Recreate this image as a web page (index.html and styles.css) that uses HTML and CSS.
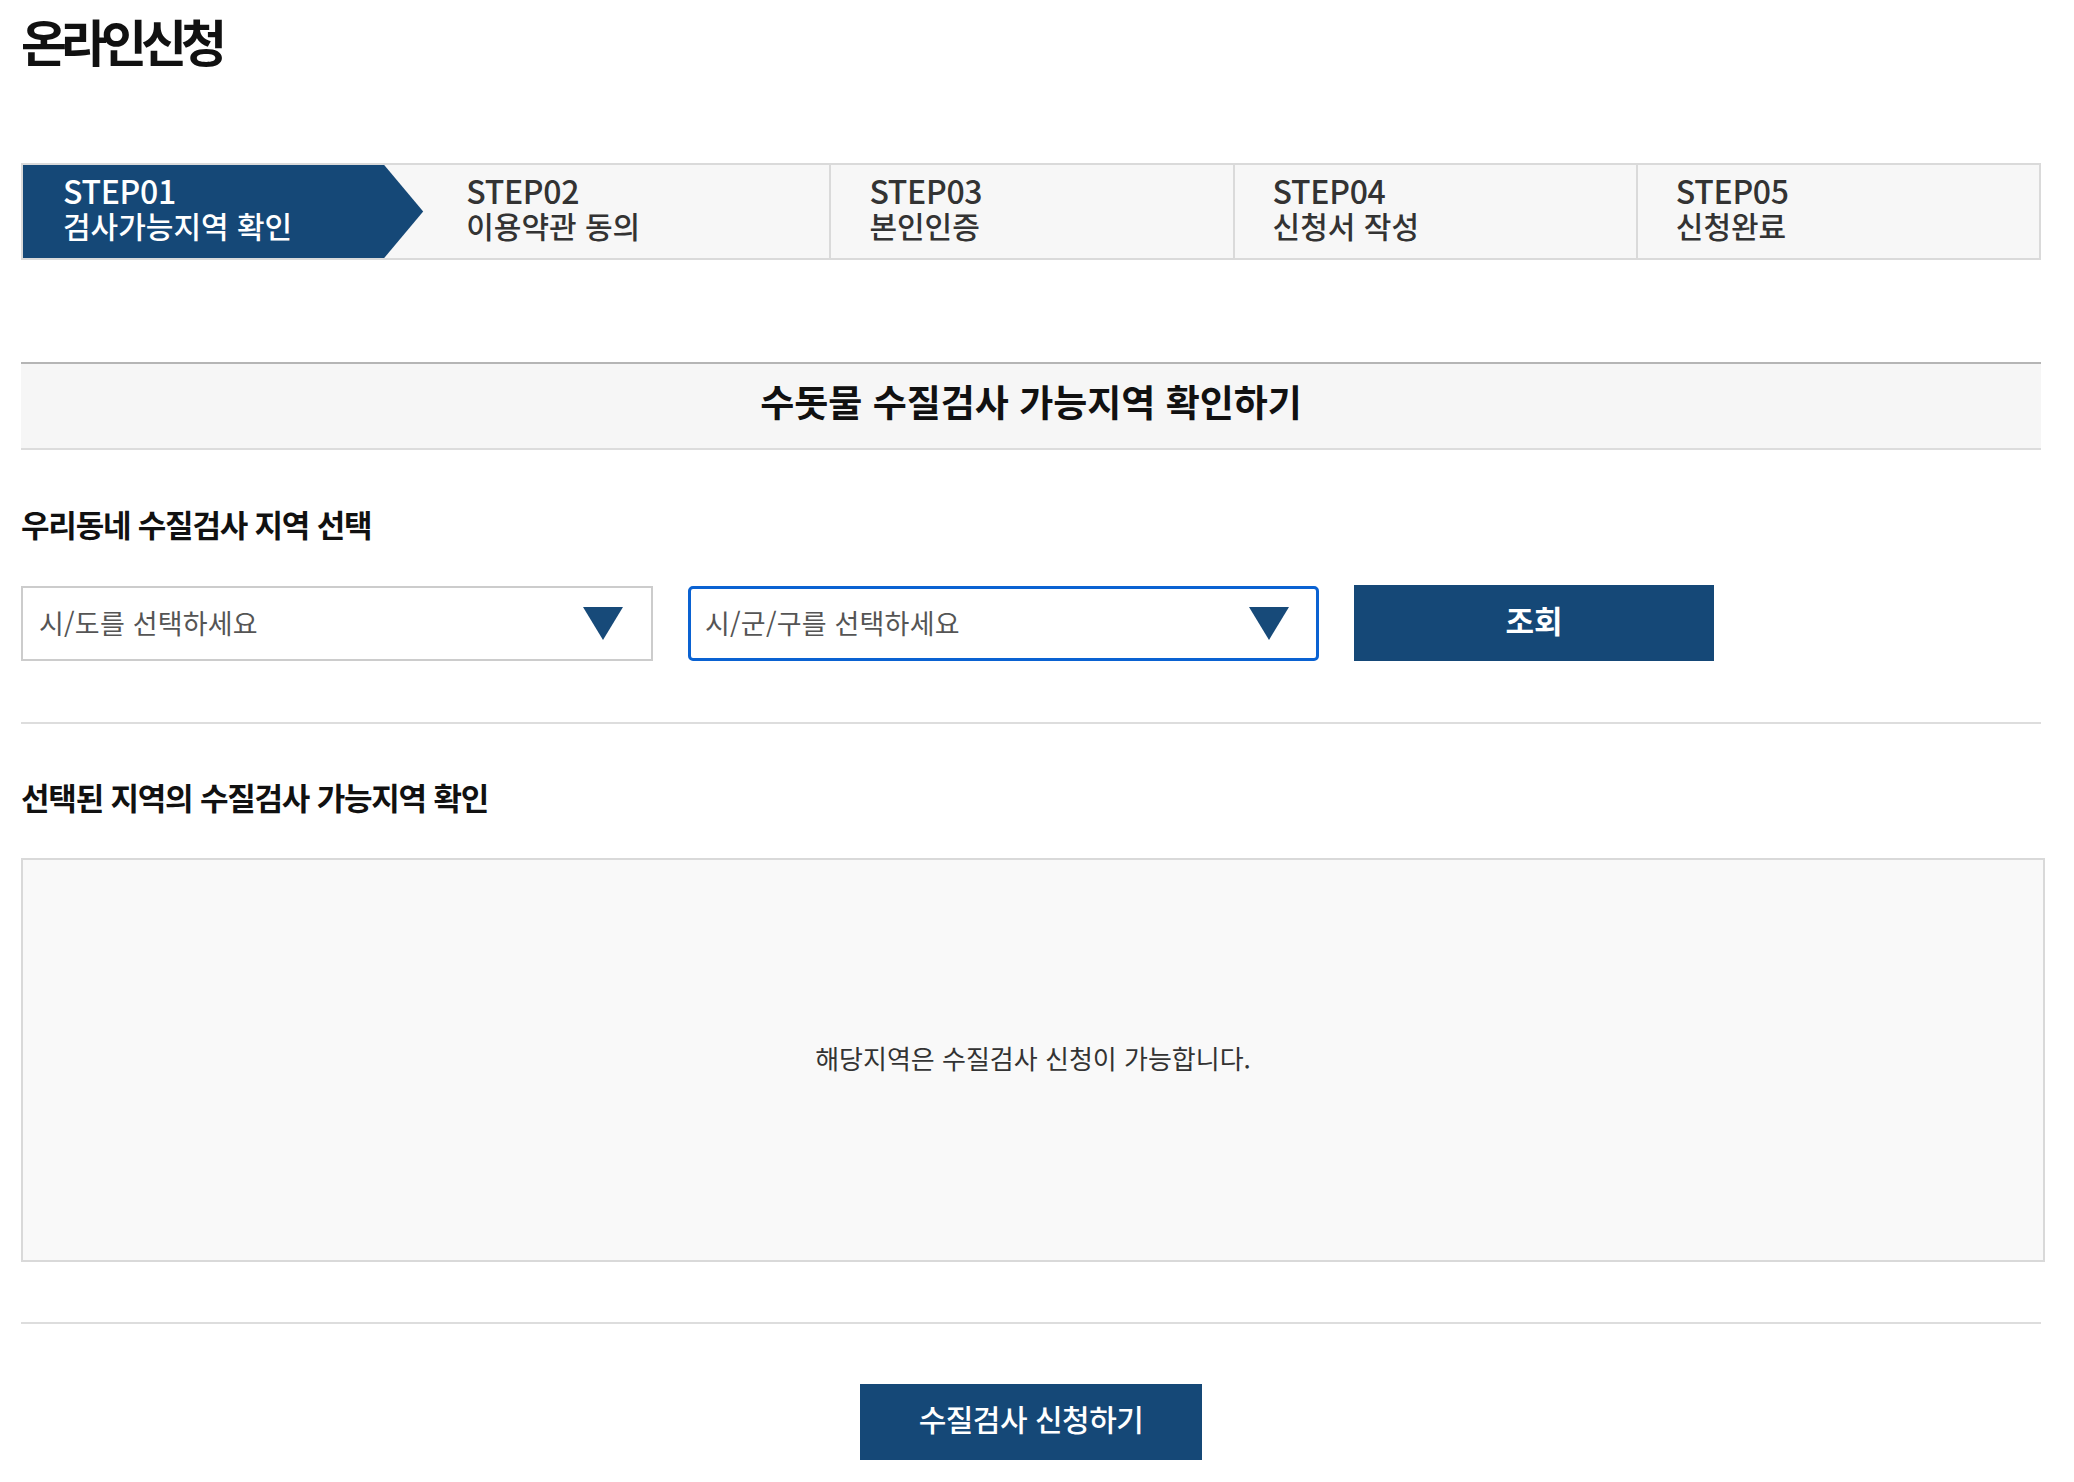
FILE: index.html
```html
<!DOCTYPE html>
<html lang="ko">
<head>
<meta charset="utf-8">
<title>온라인신청</title>
<link rel="stylesheet" href="styles.css">
</head>
<body>
<div class="page">
  <h1 class="page-title">온라인신청</h1>

  <ol class="steps">
    <li class="step is-active"><span class="step-no">STEP01</span><span class="step-name">검사가능지역 확인</span></li>
    <li class="step step-after-active"><span class="step-no">STEP02</span><span class="step-name">이용약관 동의</span></li>
    <li class="step"><span class="step-no">STEP03</span><span class="step-name">본인인증</span></li>
    <li class="step"><span class="step-no">STEP04</span><span class="step-name">신청서 작성</span></li>
    <li class="step"><span class="step-no">STEP05</span><span class="step-name">신청완료</span></li>
  </ol>

  <h2 class="section-title">수돗물 수질검사 가능지역 확인하기</h2>

  <h3 class="sub-title sub-title-first">우리동네 수질검사 지역 선택</h3>
  <div class="filter">
    <div class="select">
      <span class="select-text">시/도를 선택하세요</span>
      <svg class="select-arrow" width="40" height="33" viewBox="0 0 40 33"><polygon points="0,0 40,0 20,33" fill="#174a79"/></svg>
    </div>
    <div class="select is-focus">
      <span class="select-text">시/군/구를 선택하세요</span>
      <svg class="select-arrow" width="40" height="33" viewBox="0 0 40 33"><polygon points="0,0 40,0 20,33" fill="#174a79"/></svg>
    </div>
    <button class="btn-search" type="button">조회</button>
  </div>

  <hr class="divider divider-first">

  <h3 class="sub-title sub-title-second">선택된 지역의 수질검사 가능지역 확인</h3>
  <div class="result">
    <p class="result-text">해당지역은 수질검사 신청이 가능합니다.</p>
  </div>

  <hr class="divider divider-second">

  <div class="actions">
    <button class="btn-apply" type="button">수질검사 신청하기</button>
  </div>
</div>
</body>
</html>
```

FILE: styles.css
```css
* { box-sizing: border-box; }

html, body {
  margin: 0;
  padding: 0;
  background: #ffffff;
}

body {
  font-family: "Noto Sans CJK KR", "Noto Sans", sans-serif;
  color: #111111;
}

.page {
  width: 2045px;
  padding: 15px 0 0 21px;
}

.page > * {
  width: 2020px;
}

.page-title {
  margin: 0;
  font-size: 50px;
  line-height: 50px;
  font-weight: 700;
  letter-spacing: -6px;
  color: #111111;
}

/* steps */
.steps {
  list-style: none;
  margin: 98px 0 0 0;
  padding: 0;
  height: 97px;
  border: 2px solid #dadada;
  background: #f7f7f7;
  display: grid;
  grid-template-columns: repeat(5, 1fr);
}

.step {
  display: flex;
  flex-direction: column;
  padding: 8px 0 0 40px;
  color: #333333;
  font-weight: 500;
}

.step + .step + .step {
  border-left: 2px solid #dadada;
  padding-left: 38px;
}

.step.is-active {
  background: #154877;
  color: #ffffff;
  clip-path: polygon(0 0, calc(100% - 42px) 0, calc(100% - 3px) 50%, calc(100% - 42px) 100%, 0 100%);
}

.step-no {
  display: block;
  font-size: 32px;
  line-height: 35px;
  letter-spacing: -0.3px;
}

.step-name {
  display: block;
  font-size: 30px;
  line-height: 35px;
  letter-spacing: 0;
}

/* section header */
.section-title {
  margin: 102px 0 0 0;
  height: 88px;
  border-top: 2px solid #b5b5b5;
  border-bottom: 2px solid #dcdcdc;
  background: #f6f6f6;
  font-size: 37px;
  line-height: 74px;
  padding-bottom: 10px;
  font-weight: 700;
  letter-spacing: 0;
  text-align: center;
  color: #111111;
}

.sub-title {
  margin: 0;
  font-size: 31px;
  line-height: 30px;
  font-weight: 700;
  letter-spacing: -1.2px;
  color: #111111;
}

.sub-title-first { margin-top: 59px; }
.sub-title-second { margin-top: 58px; }

/* filter row */
.filter {
  margin-top: 47px;
  display: flex;
  gap: 35px;
  align-items: flex-start;
}

.select {
  width: 632px;
  height: 75px;
  border: 2px solid #cccccc;
  background: #ffffff;
  display: flex;
  align-items: center;
  justify-content: space-between;
  padding: 0 28px 0 16px;
}

.select.is-focus {
  width: 631px;
  border: 3px solid #0a62d2;
  border-radius: 5px;
  padding: 0 27px 0 14px;
}

.select-text {
  font-size: 27px;
  letter-spacing: 0.2px;
  color: #555555;
  padding-bottom: 3px;
}

.select-arrow {
  display: block;
  flex: none;
}

.btn-search {
  width: 360px;
  height: 76px;
  margin-top: -1px;
  border: none;
  background: #154877;
  color: #ffffff;
  font-family: inherit;
  font-size: 31px;
  font-weight: 700;
  letter-spacing: 0;
  padding: 0 0 8px 0;
}

.divider {
  margin: 0;
  height: 2px;
  border: none;
  background: #dddddd;
}

.divider-first { margin-top: 61px; }
.divider-second { margin-top: 60px; }

/* result */
.page > .result {
  width: 2024px;
}

.result {
  margin-top: 46px;
  height: 404px;
  border: 2px solid #d9d9d9;
  background: #f9f9f9;
  display: flex;
  align-items: center;
  justify-content: center;
}

.result-text {
  margin: 0;
  padding-bottom: 6px;
  font-size: 26px;
  letter-spacing: 0;
  color: #333333;
}

/* bottom action */
.actions {
  margin-top: 60px;
  display: flex;
  justify-content: center;
}

.btn-apply {
  width: 342px;
  height: 76px;
  border: none;
  background: #154877;
  color: #ffffff;
  font-family: inherit;
  font-size: 30px;
  font-weight: 500;
  letter-spacing: -0.5px;
  padding: 0 0 8px 0;
}
```
